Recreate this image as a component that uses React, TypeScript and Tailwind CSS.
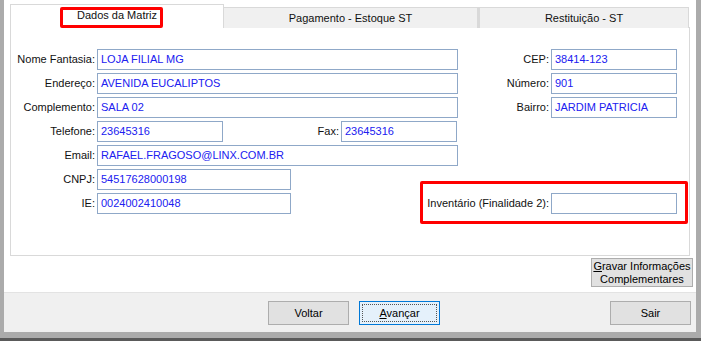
import { ReactNode } from "react";

const font = { fontFamily: '"Liberation Sans", Arial, sans-serif' };

function Field({ value = "", width }: { value?: string; width: string }) {
  return (
    <div
      className={`h-[21px] ${width} shrink-0 border border-[#8fa8c8] bg-white pl-[3px] flex items-center text-[11px] text-[#2020f0] whitespace-nowrap overflow-hidden`}
    >
      {value}
    </div>
  );
}

function Row({ label, children }: { label: string; children: ReactNode }) {
  return (
    <div className="flex items-center h-[21px]">
      <div className="w-[86px] text-right pr-[2px] whitespace-nowrap">{label}</div>
      {children}
    </div>
  );
}

function RightRow({ label, value }: { label: string; value?: string }) {
  return (
    <div className="flex items-center justify-end h-[21px] pr-[12px] min-w-0">
      <div className="whitespace-nowrap pr-[2px] shrink-0">{label}</div>
      <Field value={value} width="w-[126px]" />
    </div>
  );
}

function WinButton({ children, focused = false }: { children: ReactNode; focused?: boolean }) {
  return (
    <button
      className={`w-[81px] h-[24px] text-[11px] text-black flex items-center justify-center ${
        focused ? "bg-[#e5f1fb] border border-[#0078d7]" : "bg-[#e1e1e1] border border-[#adadad]"
      }`}
    >
      {focused ? (
        <span className="w-[75px] h-[18px] border border-dotted border-[#555] flex items-center justify-center">
          {children}
        </span>
      ) : (
        children
      )}
    </button>
  );
}

export default function App() {
  return (
    <div className="w-[701px] h-[341px] flex flex-col bg-[#ababab] text-[11px] text-[#111]" style={font}>
      <div className="flex flex-1">
        {/* left frame */}
        <div className="w-[4px] bg-[#ababab]" />

        <div className="flex-1 flex flex-col bg-white">
          {/* tab area */}
          <div className="h-[292px] pl-[6px] pt-[4px] relative">
            <div className="flex items-end h-[24px] relative z-10">
              <div className="w-[214px] h-[24px] bg-white border border-b-0 border-[#d9d9d9] flex items-center justify-center pb-[3px] relative">
                Dados da Matriz
                <div className="absolute left-[49px] top-[2px] w-[103px] h-[21px] border-[3px] border-[#ff0000] rounded-[2px]" />
              </div>
              <div className="w-[254px] h-[21px] bg-[#f0f0f0] border border-b-0 border-l-0 border-[#d9d9d9] flex items-center justify-center">
                Pagamento - Estoque ST
              </div>
              <div className="w-[211px] h-[21px] bg-[#f0f0f0] border border-b-0 border-l-[2px] border-[#d9d9d9] flex items-center justify-center">
                Restituição - ST
              </div>
            </div>

            {/* panel */}
            <div className="w-[680px] h-[229px] -mt-[1px] border border-[#d9d9d9] bg-white pt-[21px] relative">
              <div className="grid grid-cols-[447px_minmax(0,1fr)] grid-rows-[repeat(7,21px)] gap-y-[3px]">
                <Row label="Nome Fantasia:">
                  <Field value="LOJA FILIAL MG" width="w-[361px]" />
                </Row>
                <RightRow label="CEP:" value="38414-123" />
                <Row label="Endereço:">
                  <Field value="AVENIDA EUCALIPTOS" width="w-[361px]" />
                </Row>
                <RightRow label="Número:" value="901" />
                <Row label="Complemento:">
                  <Field value="SALA 02" width="w-[361px]" />
                </Row>
                <RightRow label="Bairro:" value="JARDIM PATRICIA" />
                <Row label="Telefone:">
                  <Field value="23645316" width="w-[126px]" />
                  <div className="w-[118px] text-right pr-[2px]">Fax:</div>
                  <Field value="23645316" width="w-[116px]" />
                </Row>
                <div />
                <Row label="Email:">
                  <Field value="RAFAEL.FRAGOSO@LINX.COM.BR" width="w-[361px]" />
                </Row>
                <div />
                <Row label="CNPJ:">
                  <Field value="54517628000198" width="w-[194px]" />
                </Row>
                <div />
                <Row label="IE:">
                  <Field value="0024002410048" width="w-[194px]" />
                </Row>
                <RightRow label="Inventário (Finalidade 2):" />
              </div>
              {/* annotation */}
              <div className="absolute left-[409px] top-[153px] w-[268px] h-[43px] border-[3px] border-[#ff0000] rounded-[2px] pointer-events-none" />
            </div>

            <div className="flex justify-end mt-[2px] pr-[3px]">
              <button className="w-[102px] h-[29px] bg-[#e1e1e1] border border-[#adadad] text-[11px] leading-[13px] text-black flex flex-col items-center justify-center">
                <span>
                  <span className="underline">G</span>ravar Informações
                </span>
                <span>Complementares</span>
              </button>
            </div>
          </div>

          {/* bottom buttons */}
          <div className="h-[40px] border-t border-[#e3e3e3] bg-[#f0f0f0] flex items-center pt-[1px]">
            <div className="w-[264px]" />
            <WinButton>Voltar</WinButton>
            <div className="w-[10px]" />
            <WinButton focused>
              <span>
                <span className="underline">A</span>vançar
              </span>
            </WinButton>
            <div className="flex-1" />
            <WinButton>Sair</WinButton>
            <div className="w-[5px]" />
          </div>
        </div>

        {/* right frame */}
        <div className="w-[5px] bg-[#ababab]" />
      </div>
      <div className="h-[6px] bg-[#ababab]" />
      <div className="h-[3px] bg-[#5a5a5a]" />
    </div>
  );
}
